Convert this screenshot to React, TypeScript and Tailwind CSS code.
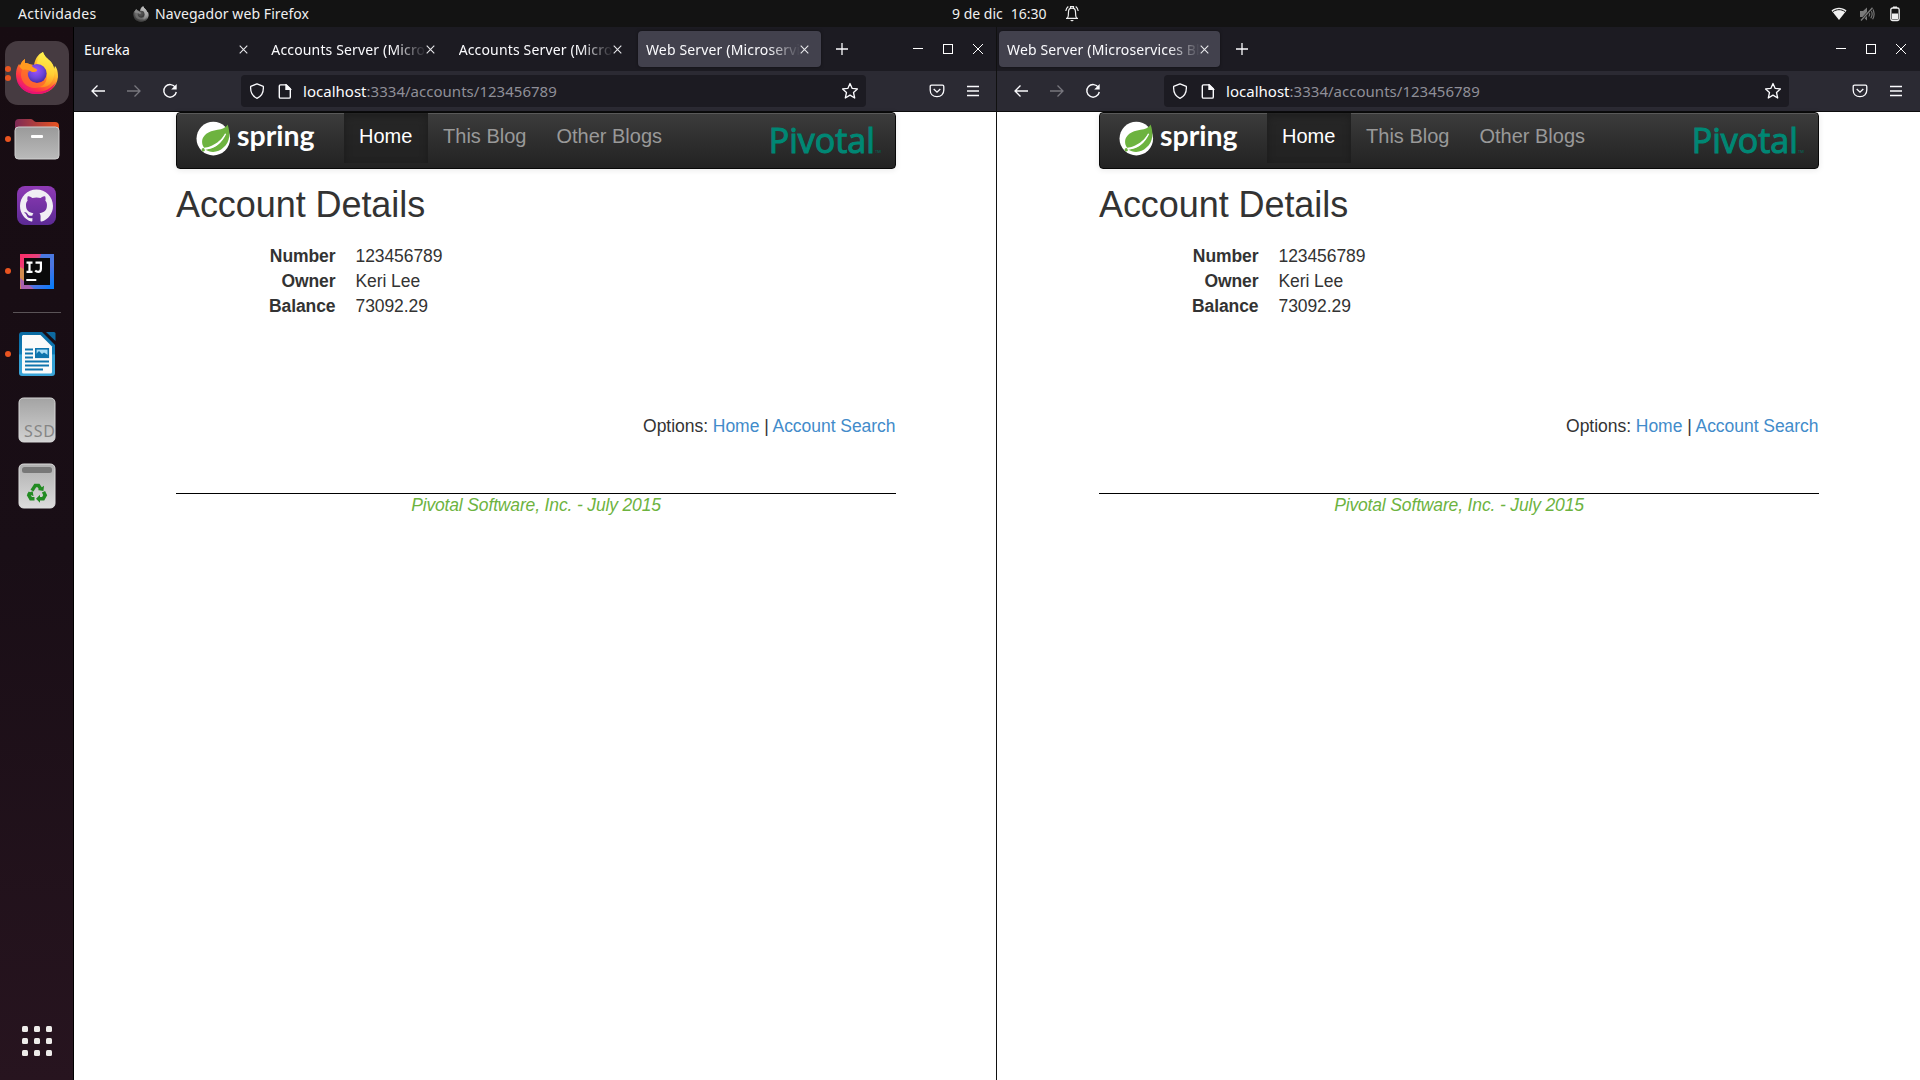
import type { ReactNode } from "react";
import { SiGithub } from "react-icons/si";

function FirefoxLogo({ size, gray, id }: { size: number; gray?: boolean; id: string }) {
  return (
    <svg width={size} height={size} viewBox="0 0 44 44" className={gray ? "grayscale" : ""}>
      <defs>
        <linearGradient id={id + "b"} x1="0.85" y1="0.1" x2="0.25" y2="0.95">
          <stop offset="0.1" stopColor="#fff44f" />
          <stop offset="0.35" stopColor="#ffb62c" />
          <stop offset="0.6" stopColor="#ff6a2a" />
          <stop offset="0.82" stopColor="#ff2f4a" />
          <stop offset="1" stopColor="#e31587" />
        </linearGradient>
        <radialGradient id={id + "g"} cx="0.45" cy="0.35" r="0.65">
          <stop offset="0" stopColor="#a050ff" />
          <stop offset="0.6" stopColor="#6b45d8" />
          <stop offset="1" stopColor="#4a2ba8" />
        </radialGradient>
        <linearGradient id={id + "y"} x1="0.6" y1="0" x2="0.5" y2="1">
          <stop offset="0" stopColor="#fff44f" />
          <stop offset="0.6" stopColor="#ffd035" />
          <stop offset="1" stopColor="#ff8a1e" />
        </linearGradient>
      </defs>
      <path
        d="M28 1c1 4 5 7 8 10 2 2 3 5 3 7l1-3c3 3 3 9 3 11-1 10-9 17-21 17S1 35 1 23c0-4 1-7 3-10l1 2c1-3 2-5 5-7v4c1 0 3 0 4 1l5 1c1-6 4-11 9-13z"
        fill={"url(#" + id + "b)"}
      />
      <path
        d="M28 1c1 4 5 7 8 10 5 7 4 16 0 21-3 4-8 5-12 4 6-2 8-6 8-12 0-7-5-9-10-10 0-5 2-10 6-13z"
        fill={"url(#" + id + "y)"}
      />
      <circle cx="22" cy="22.500" r="9.600" fill={"url(#" + id + "g)"} />
      <path
        d="M5 14c3-1 6-1 8 2 0 1 3 2 4 3-3 1-4 2-4 4 0 5 4 9 9 9 4 0 7-1 9-4-1 6-5 9-11 9C11 37 6 30 6 24c0-3 1-5 2-6-2-1-3-2-3-4z"
        fill="#ff7528"
        fillOpacity="0.700"
      />
      <path d="M4 13l1 2c1-3 2-5 5-7v4c1 0 4 0 7 3 2 3 5 2 5 4s-3 2-5 2c-3-2-6-3-9-2-3-2-4-4-4-6z" fill="#ff9a1f" />
      <path d="M2 29c4 8 11 12 20 12 8 0 15-4 19-10-3 8-10 12-19 12-11 0-18-6-20-14z" fill="#e8136f" />
    </svg>
  );
}

function FilesIcon() {
  return (
    <svg width="46" height="42" viewBox="0 0 46 42">
      <defs>
        <linearGradient id="folderBack" x1="0" x2="1">
          <stop offset="0" stopColor="#7d2a56" />
          <stop offset="1" stopColor="#e95420" />
        </linearGradient>
        <linearGradient id="folderFront" x1="0" y1="0" x2="0" y2="1">
          <stop offset="0" stopColor="#9a9a9a" />
          <stop offset="1" stopColor="#bababa" />
        </linearGradient>
      </defs>
      <path d="M1 5a4 4 0 0 1 4-4h12c2 0 3 3 5 3h19a4 4 0 0 1 4 4v10H1z" fill="url(#folderBack)" />
      <rect x="1" y="9" width="44" height="32" rx="3.5" fill="url(#folderFront)" stroke="#d0d0d0" strokeWidth="1" />
      <rect x="17" y="17" width="12" height="3" rx="1" fill="#fff" />
    </svg>
  );
}

function GithubIcon() {
  return (
    <div className="flex size-[39px] items-center justify-center rounded-[8px] bg-linear-to-b from-[#8f3ab5] to-[#5c2a94]">
      <SiGithub size={33} color="#f0eef4" />
    </div>
  );
}

function IntellijIcon() {
  return (
    <svg width="34" height="35" viewBox="0 0 34 35">
      <defs>
        <linearGradient id="ijBg" x1="0" y1="0" x2="1" y2="0.9">
          <stop offset="0" stopColor="#fe2b66" />
          <stop offset="0.3" stopColor="#e7407c" />
          <stop offset="0.55" stopColor="#6b6fd8" />
          <stop offset="1" stopColor="#087cfa" />
        </linearGradient>
      </defs>
      <rect width="34" height="35" fill="url(#ijBg)" />
      <path d="M0 13l6 3v12l-3 7H0z" fill="#d38b4e" />
      <path d="M0 24l14 11H1z" fill="#a85fae" />
      <path d="M21 0h13v14l-6-8-8-2z" fill="#4a78e0" />
      <rect x="4" y="4" width="26" height="27" fill="#0a0a0a" />
      <g fill="none" stroke="#fff" strokeWidth="2.2">
        <path d="M6.5 8.6h6M9.5 8v10M6.5 17.9h6" />
        <path d="M15.5 8.6h5.4v6.2c0 2-1 3.1-2.8 3.1-1.300 0-2.100-.5-2.900-1.400" />
      </g>
      <rect x="6.300" y="25" width="10" height="2" fill="#fff" />
    </svg>
  );
}

function WriterIcon() {
  return (
    <svg width="38" height="46" viewBox="0 0 38 46">
      <defs>
        <linearGradient id="writer" x1="0" y1="0" x2="0" y2="1">
          <stop offset="0" stopColor="#0a6aa1" />
          <stop offset="0.5" stopColor="#0f7db8" />
          <stop offset="0.52" stopColor="#2f9fd2" />
          <stop offset="1" stopColor="#3aa4d8" />
        </linearGradient>
      </defs>
      <path d="M4 1h20l13 13v28a3 3 0 0 1-3 3H4a3 3 0 0 1-3-3V4a3 3 0 0 1 3-3z" fill="url(#writer)" />
      <path d="M5 4h17.500L34 15.500V41a1.500 1.500 0 0 1-1.500 1.500h-27A1.500 1.500 0 0 1 4 41V5z" fill="#fafafa" />
      <path d="M28 1h8a1.500 1.500 0 0 1 1.500 1.500V10z" fill="#0e6aa0" />
      <path d="M7 18.500h8M7 22.500h8M7 26.500h8M7 30.500h24M7 34.500h24M7 38.500h18" stroke="#0e74ad" strokeWidth="2" />
      <rect x="17.800" y="17.800" width="12.500" height="8.500" fill="#a8dcf5" stroke="#0e74ad" strokeWidth="1.600" />
      <path d="M18 26v-3l3-3 3 3 2-1.500 4 2.500v2z" fill="#0e74ad" />
    </svg>
  );
}

function SsdIcon() {
  return (
    <svg width="38" height="46" viewBox="0 0 38 46">
      <defs>
        <linearGradient id="ssd" x1="0" y1="0" x2="0" y2="1">
          <stop offset="0" stopColor="#a3a3a3" />
          <stop offset="1" stopColor="#d2d2d2" />
        </linearGradient>
      </defs>
      <rect x="1" y="1" width="36" height="44" rx="4.500" fill="url(#ssd)" stroke="#d8d8d8" />
      <text x="6" y="39.500" fontSize="16" textLength="31" fontFamily="Noto Sans, sans-serif" fill="#858585">
        SSD
      </text>
    </svg>
  );
}

function TrashIcon() {
  return (
    <svg width="38" height="46" viewBox="0 0 38 46">
      <defs>
        <linearGradient id="bin" x1="0" y1="0" x2="0" y2="1">
          <stop offset="0" stopColor="#b0b0b0" />
          <stop offset="1" stopColor="#dcdcdc" />
        </linearGradient>
      </defs>
      <rect x="1" y="1" width="36" height="44" rx="4.500" fill="url(#bin)" stroke="#dcdcdc" />
      <rect x="4" y="4" width="30" height="6" rx="2.500" fill="#787878" />
      <g transform="translate(19 29.700)" fill="none" stroke="#228b22" strokeWidth="3.500">
        <path d="M-5-2l3.300-5.300h3.200L3.600-4" />
        <path d="M6.500-1l1.700 3.500-2 3.500H2" />
        <path d="M-2.500 6h-3.700l-2-3.500 1.500-2.800" />
      </g>
      <g transform="translate(19 29.700)" fill="#228b22">
        <path d="M.8-2.800l5.600 1L7-7z" />
        <path d="M3 2v8L-1 6z" />
        <path d="M-9.800.6l5.500-2 .8 5z" />
      </g>
    </svg>
  );
}

function DockItem({ children, dots = 0, active }: { children: ReactNode; dots?: number; active?: boolean }) {
  return (
    <div className={"relative flex h-16 w-16 items-center justify-center rounded-[13px] " + (active ? "bg-[#463b41]" : "")}>
      {dots > 0 && (
        <div className="absolute top-0 left-0 flex h-full flex-col justify-center gap-[3px]">
          {Array.from({ length: dots }, (_, i) => (
            <span key={i} className="size-[6px] rounded-full bg-[#e95420]" />
          ))}
        </div>
      )}
      {children}
    </div>
  );
}

function Dock() {
  return (
    <aside className="flex w-[74px] shrink-0 flex-col items-center border-r border-black bg-linear-to-b from-[#170c12] via-[#190e16] to-[#27141f] pt-[14px] pb-6">
      <div className="flex flex-col gap-[2px]">
        <DockItem dots={2} active>
          <FirefoxLogo size={44} id="dock" />
        </DockItem>
        <DockItem dots={1}>
          <FilesIcon />
        </DockItem>
        <DockItem>
          <GithubIcon />
        </DockItem>
        <DockItem dots={1}>
          <IntellijIcon />
        </DockItem>
      </div>
      <div className="mt-[9px] mb-[9px] h-px w-12 bg-[#5a5357]" />
      <div className="flex flex-col gap-[2px]">
        <DockItem dots={1}>
          <WriterIcon />
        </DockItem>
        <DockItem>
          <SsdIcon />
        </DockItem>
        <DockItem>
          <TrashIcon />
        </DockItem>
      </div>
      <div className="mt-auto grid grid-cols-3 gap-[6px]">
        {Array.from({ length: 9 }, (_, i) => (
          <span key={i} className="size-[6px] rounded-[1.5px] bg-[#eeecea]" />
        ))}
      </div>
    </aside>
  );
}

function TopBar() {
  return (
    <header className="flex h-[27px] shrink-0 items-center bg-[#131313] text-[14px] leading-[27px] text-[#f0f0f0]">
      <div className="flex w-[952px] items-center pl-[18px]">
        <span className="tracking-[0.35px]">Actividades</span>
        <span className="ml-[36px] flex opacity-80">
          <FirefoxLogo size={16} id="bar" gray />
        </span>
        <span className="ml-[6.5px] tracking-[0.08px]">Navegador web Firefox</span>
      </div>
      <div className="flex items-center">
        <span className="whitespace-pre">9 de dic</span>
        <span className="ml-[8px]">16:30</span>
        <svg className="ml-[18px]" width="14" height="17" viewBox="0 0 14 17" fill="none" stroke="#f0f0f0" strokeWidth="1.200">
          <path d="M1 13.400h12M2.500 13c1-1.500 1-3 1-6 0-2.500 1.500-3.800 3.500-3.800s3.500 1.300 3.500 3.800c0 3 0 4.500 1 6" />
          <path d="M5.500 3V1.500h3V3M.8 6C1 4 2 2.500 3.300 1.500M13.200 6C13 4 12 2.500 10.700 1.500" />
          <path d="M5 15h4l-2 1.500z" fill="#f0f0f0" stroke="none" />
        </svg>
      </div>
      <div className="ml-auto flex items-center pr-[19px]">
        <svg width="16" height="14" viewBox="0 0 16 14">
          <path d="M.5 3.500C5-.2 11-.2 15.500 3.500L8 13z" fill="#f0f0f0" />
          <path d="M2 4.600c4-2.600 8-2.600 12 0" stroke="#131313" strokeWidth="1" fill="none" />
        </svg>
        <svg className="ml-3" width="16" height="14" viewBox="0 0 16 14" fill="#7b7b7b">
          <path d="M1 4h3l4-3.500v13L4 10H1z" />
          <path d="M9.800 5c1 1 1 3 0 4.500M11.500 3c2 2.200 2 5.500.3 8.300M13.400 1.500c2 3 2 7.500.2 10.800" fill="none" stroke="#7b7b7b" strokeWidth="1.100" />
          <path d="M2 13.500L13.500.8" stroke="#131313" strokeWidth="2.600" />
          <path d="M2 13.500L13.500.8" stroke="#7b7b7b" strokeWidth="1.300" />
        </svg>
        <svg className="ml-[14px]" width="12" height="16" viewBox="0 0 12 16">
          <path d="M4 .5h4v1.500H4z" fill="#f0f0f0" />
          <rect x="1.800" y="2" width="8.400" height="12.600" rx="1.800" fill="none" stroke="#f0f0f0" strokeWidth="1.300" />
          <rect x="3" y="7.500" width="6" height="6" fill="#f0f0f0" />
        </svg>
      </div>
    </header>
  );
}

function CloseGlyph() {
  return (
    <svg className="shrink-0" width="9" height="9" viewBox="0 0 9 9" stroke="#e8e8ec" strokeWidth="1.100">
      <path d="M.7.7l7.600 7.600M8.300.7L.7 8.300" />
    </svg>
  );
}

type Tab = { title: string; active?: boolean; wide?: boolean; fade?: boolean };

function TabItem({ tab }: { tab: Tab }) {
  return (
    <div
      className={
        "flex h-9 items-center rounded pr-[11.5px] pl-2 " +
        (tab.wide ? "w-[221px] " : "w-[183px] ") +
        (tab.active ? "bg-[#42414d] shadow-[0_0_3px_rgba(0,0,0,0.5)]" : "")
      }
    >
      <span
        className={
          "min-w-0 flex-1 overflow-hidden text-[14px] tracking-[0.15px] whitespace-nowrap text-[#fbfbfe] " +
          (tab.fade ? "mask-[linear-gradient(to_left,transparent,black_2em)]" : "")
        }
      >
        {tab.title}
      </span>
      <CloseGlyph />
    </div>
  );
}

function SpringLogo() {
  return (
    <svg width="122" height="40" viewBox="0 0 122 40">
      <circle cx="19.300" cy="19.600" r="16.800" fill="#fff" />
      <path
        d="M33.600 5.500c-2 3.500-5.500 4.600-10 5.200C13.800 12 8.600 16.500 8.100 22c-.2 3 .6 5 2 6.700 1.700-.2 5-.5 8-2.200 5-2.400 9-5.500 13-11.500-2.500 6.300-6 11-11.500 13.600-3.300 1.600-6.500 2-8.500 2 6 3.900 14 2.600 18-1.800C36.800 23 36.300 13 33.600 5.500z"
        fill="#6db33f"
      />
      <circle cx="9.300" cy="30.800" r="1.700" fill="#6db33f" />
      <path d="M10.300 29.800c9-.6 17-5.500 21.300-15" stroke="#fff" strokeWidth="1.300" fill="none" />
      <text x="43" y="26.800" fontSize="28.500" fontWeight="700" textLength="77.500" lengthAdjust="spacingAndGlyphs" fontFamily="Lato, sans-serif" fill="#fff">
        spring
      </text>
    </svg>
  );
}

function PivotalLogo() {
  return (
    <svg width="116" height="40" viewBox="0 0 116 40">
      <text x="1.800" y="33.800" fontSize="34.500" textLength="106" lengthAdjust="spacingAndGlyphs" fontFamily="Open Sans, sans-serif" fill="#008774" stroke="#008774" strokeWidth="1.100">
        Pivotal
      </text>
      <text x="108" y="33.500" fontSize="4" fontFamily="Noto Sans, sans-serif" fill="#00705f">
        TM
      </text>
    </svg>
  );
}

const details = [
  ["Number", "123456789"],
  ["Owner", "Keri Lee"],
  ["Balance", "73092.29"],
];

function AccountPage() {
  return (
    <main className="min-h-0 flex-1 bg-white pl-[102px] font-['Liberation_Sans',Arial,sans-serif] text-[17.5px] leading-[25px] text-[#333]">
      <div className="w-[720px]">
        <nav className="flex h-[57px] rounded-[4px] border border-[#080808] bg-linear-to-b from-[#3c3c3c] to-[#222] text-[20px] leading-[25px] text-[#999] shadow-[inset_0_1px_0_rgba(255,255,255,0.15),0_1px_6px_rgba(0,0,0,0.09)]">
          <div className="flex w-[167px] pt-[6px] pl-[17px]">
            <SpringLogo />
          </div>
          <a className="h-[50px] bg-[#222]/80 pr-[15.7px] pl-[15px] pt-[11px] text-white shadow-[inset_0_3px_9px_rgba(0,0,0,0.25)]">Home</a>
          <a className="px-[15px] pt-[11px]">This Blog</a>
          <a className="px-[15px] pt-[11px]">Other Blogs</a>
          <div className="ml-auto flex pt-[6px] pr-[12px]">
            <PivotalLogo />
          </div>
        </nav>
        <h1 className="mt-4 text-[36px] leading-[40px] tracking-[-0.07px]">Account Details</h1>
        <dl className="mt-[19px] grid grid-cols-[159.5px_1fr] gap-x-5 tracking-[-0.08px]">
          {details.map(([term, value]) => (
            <div key={term} className="contents">
              <dt className="text-right font-bold">{term}</dt>
              <dd>{value}</dd>
            </div>
          ))}
        </dl>
        <p className="mt-[95px] pr-[0.5px] text-right tracking-[-0.04px]">
          Options: <a className="text-[#428bca]">Home</a> | <a className="text-[#428bca]">Account Search</a>
        </p>
        <footer className="mt-[54px] border-t border-black text-center leading-[23px] tracking-[-0.15px] text-[#6db33f] italic">
          Pivotal Software, Inc. - July 2015
        </footer>
      </div>
    </main>
  );
}

function BrowserWindow({ tabs }: { tabs: Tab[] }) {
  return (
    <section className="flex min-w-0 flex-col bg-white">
      <div className="flex h-11 shrink-0 items-center bg-[#1c1b22]">
        <div className="flex h-11 w-[922px] items-center pl-[2px]">
          <div className="flex gap-[4.33px]">
            {tabs.map((tab, i) => (
              <TabItem key={i} tab={tab} />
            ))}
          </div>
          <svg className="ml-[15.5px]" width="12" height="12" viewBox="0 0 12 12" stroke="#fbfbfe" strokeWidth="1.300">
            <path d="M6 0v12M0 6h12" />
          </svg>
          <div className="mr-[13px] ml-auto flex items-center gap-5">
            <svg width="10" height="10" viewBox="0 0 10 10" stroke="#fff">
              <path d="M0 4.500h10" />
            </svg>
            <svg width="10" height="10" viewBox="0 0 10 10" stroke="#fff" fill="none">
              <rect x=".5" y=".5" width="9" height="9" />
            </svg>
            <svg width="10" height="10" viewBox="0 0 10 10" stroke="#fff">
              <path d="M0 0l10 10M10 0L0 10" />
            </svg>
          </div>
        </div>
      </div>
      <div className="shrink-0 border-b border-[#0c0c0d] bg-[#2b2a33] text-[#fbfbfe]">
        <div className="flex h-10 w-[922px] items-center pr-[17px] pl-[17px]">
          <svg width="14" height="12" viewBox="0 0 14 12" fill="none" stroke="currentColor" strokeWidth="1.300">
            <path d="M14 6H1M6.500.5L1 6l5.500 5.500" />
          </svg>
          <svg className="ml-[22px] text-[#78777e]" width="14" height="12" viewBox="0 0 14 12" fill="none" stroke="currentColor" strokeWidth="1.300">
            <path d="M0 6h13M7.500.5L13 6l-5.500 5.500" />
          </svg>
          <svg className="ml-[21px]" width="16" height="16" viewBox="0 0 16 16" fill="none" stroke="currentColor" strokeWidth="1.400">
            <path d="M13.500 4.600A6.300 6.300 0 1 0 14.300 9" />
            <path d="M14.700 1v5.500H9.200z" fill="currentColor" stroke="none" />
          </svg>
          <div className="mr-auto ml-[63px] flex h-8 w-[625px] items-center rounded bg-[#1c1b22] pr-[7px] pl-[8px]">
            <svg width="16" height="16" viewBox="0 0 16 16" fill="none" stroke="currentColor" strokeWidth="1.300">
              <path d="M8 .8l6.300 2.500c.5 5.500-1.800 10-6.300 12C3.500 13.300 1.200 8.800 1.700 3.300z" strokeLinejoin="round" />
            </svg>
            <svg className="ml-[13px]" width="14" height="15" viewBox="0 0 14 15" fill="none" stroke="currentColor" strokeWidth="1.400">
              <path d="M2.500.9h5.800l4 4v8a1.200 1.200 0 0 1-1.200 1.200H2.500a1.200 1.200 0 0 1-1.200-1.200v-10.800A1.200 1.200 0 0 1 2.500.9z" />
              <path d="M8 .9v4.300h4.300z" fill="currentColor" />
            </svg>
            <span className="ml-[11px] text-[15px] tracking-[0.02px] text-[#8f8f98]">
              <span className="text-[#fbfbfe]">localhost</span>:3334/accounts/123456789
            </span>
            <svg className="ml-auto" width="18" height="18" viewBox="0 0 18 18" fill="none" stroke="currentColor" strokeWidth="1.300" strokeLinejoin="round">
              <path d="M9 1.500l2.200 4.900 5.200.5-3.900 3.600 1.200 5.500L9 13.100 4.300 16l1.200-5.500L1.600 6.900l5.200-.5z" />
            </svg>
          </div>
          <svg width="16" height="14" viewBox="0 0 16 14" fill="none" stroke="currentColor" strokeWidth="1.300">
            <path d="M2.500 1.200h11c.8 0 1.300.5 1.300 1.300V6c0 4-2.700 6.700-6.800 6.700S1.200 10 1.200 6V2.500c0-.8.5-1.300 1.300-1.300z" />
            <path d="M4.700 5L8 8.200 11.300 5" />
          </svg>
          <svg className="ml-[22px]" width="12" height="12" viewBox="0 0 12 12" stroke="currentColor" strokeWidth="1.300">
            <path d="M0 1.500h12M0 6h12M0 10.500h12" />
          </svg>
        </div>
      </div>
      <AccountPage />
    </section>
  );
}

const leftTabs: Tab[] = [
  { title: "Eureka" },
  { title: "Accounts Server (Microservices", fade: true },
  { title: "Accounts Server (Microservices", fade: true },
  { title: "Web Server (Microservices", active: true, fade: true },
];

const rightTabs: Tab[] = [{ title: "Web Server (Microservices Blog", active: true, wide: true, fade: true }];

export default function App() {
  return (
    <div className="flex h-[1080px] w-[1920px] flex-col overflow-hidden bg-black font-['Noto_Sans',sans-serif]">
      <TopBar />
      <div className="flex min-h-0 flex-1">
        <Dock />
        <div className="grid flex-1 grid-cols-[922px_923px] gap-px bg-[#111]">
          <BrowserWindow tabs={leftTabs} />
          <BrowserWindow tabs={rightTabs} />
        </div>
      </div>
    </div>
  );
}
